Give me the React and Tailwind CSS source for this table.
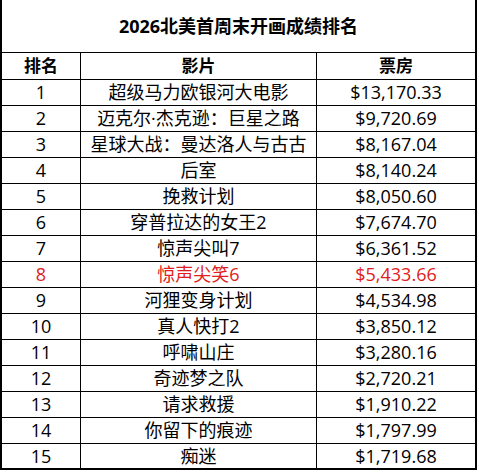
const rows = [
  ['1', '超级马力欧银河大电影', '$13,170.33'],
  ['2', '迈克尔·杰克逊：巨星之路', '$9,720.69'],
  ['3', '星球大战：曼达洛人与古古', '$8,167.04'],
  ['4', '后室', '$8,140.24'],
  ['5', '挽救计划', '$8,050.60'],
  ['6', '穿普拉达的女王2', '$7,674.70'],
  ['7', '惊声尖叫7', '$6,361.52'],
  ['8', '惊声尖笑6', '$5,433.66', true],
  ['9', '河狸变身计划', '$4,534.98'],
  ['10', '真人快打2', '$3,850.12'],
  ['11', '呼啸山庄', '$3,280.16'],
  ['12', '奇迹梦之队', '$2,720.21'],
  ['13', '请求救援', '$1,910.22'],
  ['14', '你留下的痕迹', '$1,797.99'],
  ['15', '痴迷', '$1,719.68'],
];

const font = { fontFamily: '"Open Sans", "Noto Sans CJK SC", sans-serif' };

export default function App() {
  return (
    <div className="w-[479px] h-[472px] bg-white" style={font}>
      <div className="w-[477px] border-x-2 border-b-2 border-black text-black">
        <div className="h-[52px] flex items-center justify-center text-[18px] font-bold">
          2026北美首周末开画成绩排名
        </div>
        <div className="h-[27px] flex border-t border-black text-[17px] font-bold">
          <div className="w-[79px] border-r border-black flex items-center justify-center">排名</div>
          <div className="w-[236px] border-r border-black flex items-center justify-center">影片</div>
          <div className="flex-1 flex items-center justify-center">票房</div>
        </div>
        {rows.map(([rank, name, gross, hot], i) => (
          <div
            key={rank}
            className={`${i === rows.length - 1 ? 'h-[25px]' : 'h-[26px]'} flex border-t border-black ${hot ? 'text-[#e02020]' : ''}`}
          >
            <div className="w-[79px] border-r border-black flex items-center justify-center text-[18px]">{rank}</div>
            <div className="w-[236px] border-r border-black flex items-center justify-center text-[18px] whitespace-nowrap">{name}</div>
            <div className="flex-1 flex items-center justify-center text-[18px]">{gross}</div>
          </div>
        ))}
      </div>
    </div>
  );
}
